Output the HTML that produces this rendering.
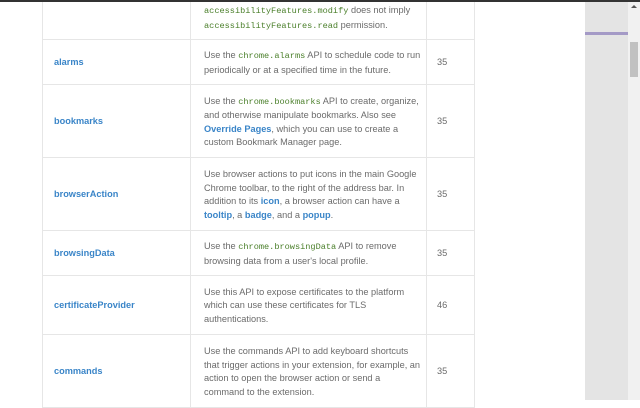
<!DOCTYPE html><html><head><style>
body{margin:0;width:640px;height:400px;overflow:hidden;background:#fff;font-family:"Liberation Sans",sans-serif;position:relative}
.top{position:absolute;left:0;top:0;width:640px;height:2px;background:#333}
.side{position:absolute;left:585px;top:2px;width:43px;height:398px;background:#e4e4e4}
.pur{position:absolute;left:585px;top:32px;width:43px;height:3px;background:#a49ac6}
.sb{position:absolute;left:628px;top:2px;width:12px;height:398px;background:#f1f1f1}
.th{position:absolute;left:630px;top:42px;width:8px;height:35px;background:#c1c1c1}
.ar{position:absolute;left:631px;top:5px;width:0;height:0;border-left:3px solid transparent;border-right:3px solid transparent;border-bottom:3px solid #555}
table{position:absolute;left:42px;top:-14px;border-collapse:collapse;width:432px;table-layout:fixed}
td{border:1px solid #e6e6e6;font-size:9.2px;line-height:13.5px;color:#6b6b6b;vertical-align:middle;padding:2px 0 0 0;overflow:hidden;white-space:nowrap}
td.n{padding-left:11px;color:#3a85c8;font-weight:bold}
td.d{padding-left:13px}
td.v{padding-left:10px}
code{font-family:"Liberation Mono",monospace;color:#4a7f2a;font-size:8.6px}
b{color:#3a85c8}
</style></head><body>
<table>
<colgroup><col style="width:148px"><col style="width:236px"><col style="width:48px"></colgroup>
<tr style="height:53px"><td class="n"></td><td class="d" style="vertical-align:bottom;padding-bottom:6px"><br><code>accessibilityFeatures.modify</code> does not imply<br><code>accessibilityFeatures.read</code> permission.</td><td class="v"></td></tr>
<tr style="height:45px"><td class="n">alarms</td><td class="d">Use the <code>chrome.alarms</code> API to schedule code to run<br>periodically or at a specified time in the future.</td><td class="v">35</td></tr>
<tr style="height:73px"><td class="n">bookmarks</td><td class="d">Use the <code>chrome.bookmarks</code> API to create, organize,<br>and otherwise manipulate bookmarks. Also see<br><b>Override Pages</b>, which you can use to create a<br>custom Bookmark Manager page.</td><td class="v">35</td></tr>
<tr style="height:73px"><td class="n">browserAction</td><td class="d">Use browser actions to put icons in the main Google<br>Chrome toolbar, to the right of the address bar. In<br>addition to its <b>icon</b>, a browser action can have a<br><b>tooltip</b>, a <b>badge</b>, and a <b>popup</b>.</td><td class="v">35</td></tr>
<tr style="height:45px"><td class="n">browsingData</td><td class="d">Use the <code>chrome.browsingData</code> API to remove<br>browsing data from a user's local profile.</td><td class="v">35</td></tr>
<tr style="height:59px"><td class="n">certificateProvider</td><td class="d">Use this API to expose certificates to the platform<br>which can use these certificates for TLS<br>authentications.</td><td class="v">46</td></tr>
<tr style="height:73px"><td class="n">commands</td><td class="d">Use the commands API to add keyboard shortcuts<br>that trigger actions in your extension, for example, an<br>action to open the browser action or send a<br>command to the extension.</td><td class="v">35</td></tr>
</table>
<div class="top"></div><div class="side"></div><div class="pur"></div><div class="sb"></div><div class="th"></div><div class="ar"></div>
</body></html>
